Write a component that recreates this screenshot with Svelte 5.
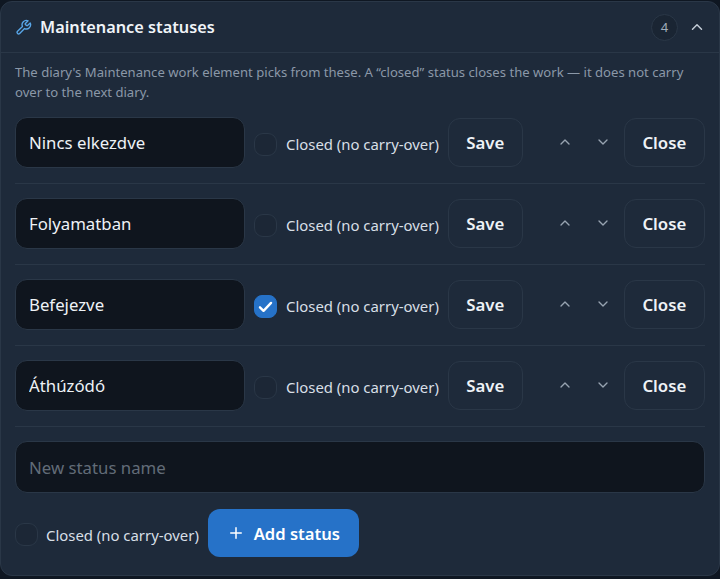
<script>
  const rows = [
    { name: 'Nincs elkezdve', closed: false },
    { name: 'Folyamatban', closed: false },
    { name: 'Befejezve', closed: true },
    { name: 'Áthúzódó', closed: false }
  ];
</script>

{#snippet check(on)}
  <span class="box" class:on>
    {#if on}
      <svg viewBox="0 0 24 24" width="19" height="19" fill="none" stroke="#fff" stroke-width="3" stroke-linecap="round" stroke-linejoin="round"><path d="M5 13l4.5 4.5L19 7.5" /></svg>
    {/if}
  </span>
  <span class="label">Closed (no carry-over)</span>
{/snippet}

<div class="page">
  <section class="card">
    <header class="head">
      <svg class="wrench" viewBox="0 0 24 24" width="17" height="17" fill="none" stroke="#58a6e8" stroke-width="1.9" stroke-linecap="round" stroke-linejoin="round"><path d="M14.7 6.3a1 1 0 0 0 0 1.4l1.6 1.6a1 1 0 0 0 1.4 0l3.77-3.77a6 6 0 0 1-7.94 7.94l-6.91 6.91a2.12 2.12 0 0 1-3-3l6.91-6.91a6 6 0 0 1 7.94-7.94l-3.76 3.76z" /></svg>
      <h2>Maintenance statuses</h2>
      <span class="count">4</span>
      <svg class="toggle" viewBox="0 0 24 24" width="18" height="18" fill="none" stroke="#c3ccd6" stroke-width="2" stroke-linecap="round" stroke-linejoin="round"><path d="M6 15l6-6 6 6" /></svg>
    </header>
    <div class="body">
      <p class="desc">The diary's Maintenance work element picks from these. A “closed” status closes the work — it does not carry over to the next diary.</p>
      {#each rows as row}
        <div class="row">
          <input class="field name" value={row.name} />
          <div class="closed">{@render check(row.closed)}</div>
          <button class="btn">Save</button>
          <div class="arrows">
            <svg viewBox="0 0 24 24" width="16" height="16" fill="none" stroke="#98a3b1" stroke-width="2" stroke-linecap="round" stroke-linejoin="round"><path d="M6 15l6-6 6 6" /></svg>
            <svg viewBox="0 0 24 24" width="16" height="16" fill="none" stroke="#98a3b1" stroke-width="2" stroke-linecap="round" stroke-linejoin="round"><path d="M6 9l6 6 6-6" /></svg>
          </div>
          <button class="btn close">Close</button>
        </div>
      {/each}
      <input class="field new" placeholder="New status name" />
      <div class="add-row">
        <div class="closed">{@render check(false)}</div>
        <button class="add">
          <svg viewBox="0 0 24 24" width="18" height="18" fill="none" stroke="#fff" stroke-width="2" stroke-linecap="round"><path d="M12 5v14M5 12h14" /></svg>
          Add status
        </button>
      </div>
    </div>
  </section>
</div>

<style>
  :global(body) {
    margin: 0;
    background: #0f1722;
    font-family: "Noto Sans", "Open Sans", sans-serif;
  }
  .page {
    width: 720px;
    height: 579px;
    padding-top: 1px;
    box-sizing: border-box;
    overflow: hidden;
  }
  .card {
    width: 720px;
    height: 575px;
    box-sizing: border-box;
    background: #1e2a3a;
    border: 1px solid #2a3747;
    border-radius: 12px;
  }
  .head {
    display: flex;
    align-items: center;
    height: 50px;
    padding: 0 13px 0 14px;
    border-bottom: 1px solid #2a3747;
  }
  .wrench { margin-right: 8px; }
  h2 {
    margin: 0;
    flex: 1;
    color: #f0f4f8;
    font-size: 16.3px;
    font-weight: 600;
  }
  .count {
    width: 27px;
    height: 27px;
    box-sizing: border-box;
    border: 1px solid #2a3747;
    border-radius: 50%;
    background: #1a2533;
    color: #a0acba;
    font-size: 13px;
    display: flex;
    align-items: center;
    justify-content: center;
    margin-right: 10px;
  }
  .body { padding: 9px 14px 0; }
  .desc {
    margin: 0 0 15px;
    color: #8b98a8;
    font-size: 13.1px;
    line-height: 20px;
  }
  .row {
    display: flex;
    align-items: center;
    height: 51px;
    padding-bottom: 15px;
    margin-bottom: 14px;
    border-bottom: 1px solid #2a3747;
  }
  .field {
    box-sizing: border-box;
    height: 51px;
    background: #0f151e;
    border: 1px solid #2a3747;
    border-radius: 12px;
    color: #eef2f6;
    font: 400 16.8px "Noto Sans", "Open Sans", sans-serif;
    padding: 0 13px;
    outline: none;
  }
  .field::placeholder { color: #626c78; opacity: 1; }
  .name { width: 230px; flex: none; }
  .new { width: 690px; height: 52px; display: block; }
  .closed {
    display: flex;
    align-items: center;
    gap: 9px;
    padding-top: 3px;
  }
  .row .closed { margin-left: 9px; }
  .add-row .closed { gap: 8px; }
  .box {
    width: 23px;
    height: 23px;
    box-sizing: border-box;
    border: 1px solid #2a3747;
    border-radius: 9px;
    background: #1c2736;
    display: flex;
    align-items: center;
    justify-content: center;
    flex: none;
  }
  .box.on {
    background: #2672c8;
    border-color: #2672c8;
    border-radius: 8px;
  }
  .label {
    color: #d8dfe6;
    font-size: 14.9px;
    white-space: nowrap;
  }
  .btn {
    box-sizing: border-box;
    height: 49px;
    width: 75px;
    margin-left: 9px;
    background: #1e2a3a;
    border: 1px solid #2a3747;
    border-radius: 12px;
    color: #eef2f6;
    font: 600 16.8px "Noto Sans", "Open Sans", sans-serif;
    padding: 0;
  }
  .btn.close { width: 81px; margin-left: 0; }
  .arrows {
    width: 101px;
    box-sizing: border-box;
    display: flex;
    justify-content: center;
    gap: 22px;
    flex: none;
    padding: 0 0 2px 21px;
  }
  .add-row {
    display: flex;
    align-items: center;
    gap: 9px;
    margin-top: 16px;
  }
  .add {
    width: 151px;
    height: 48px;
    box-sizing: border-box;
    background: #2672c8;
    border: none;
    border-radius: 12px;
    color: #fff;
    font: 600 16.6px "Noto Sans", "Open Sans", sans-serif;
    display: flex;
    align-items: center;
    justify-content: center;
    gap: 9px;
    padding: 0;
  }
</style>
